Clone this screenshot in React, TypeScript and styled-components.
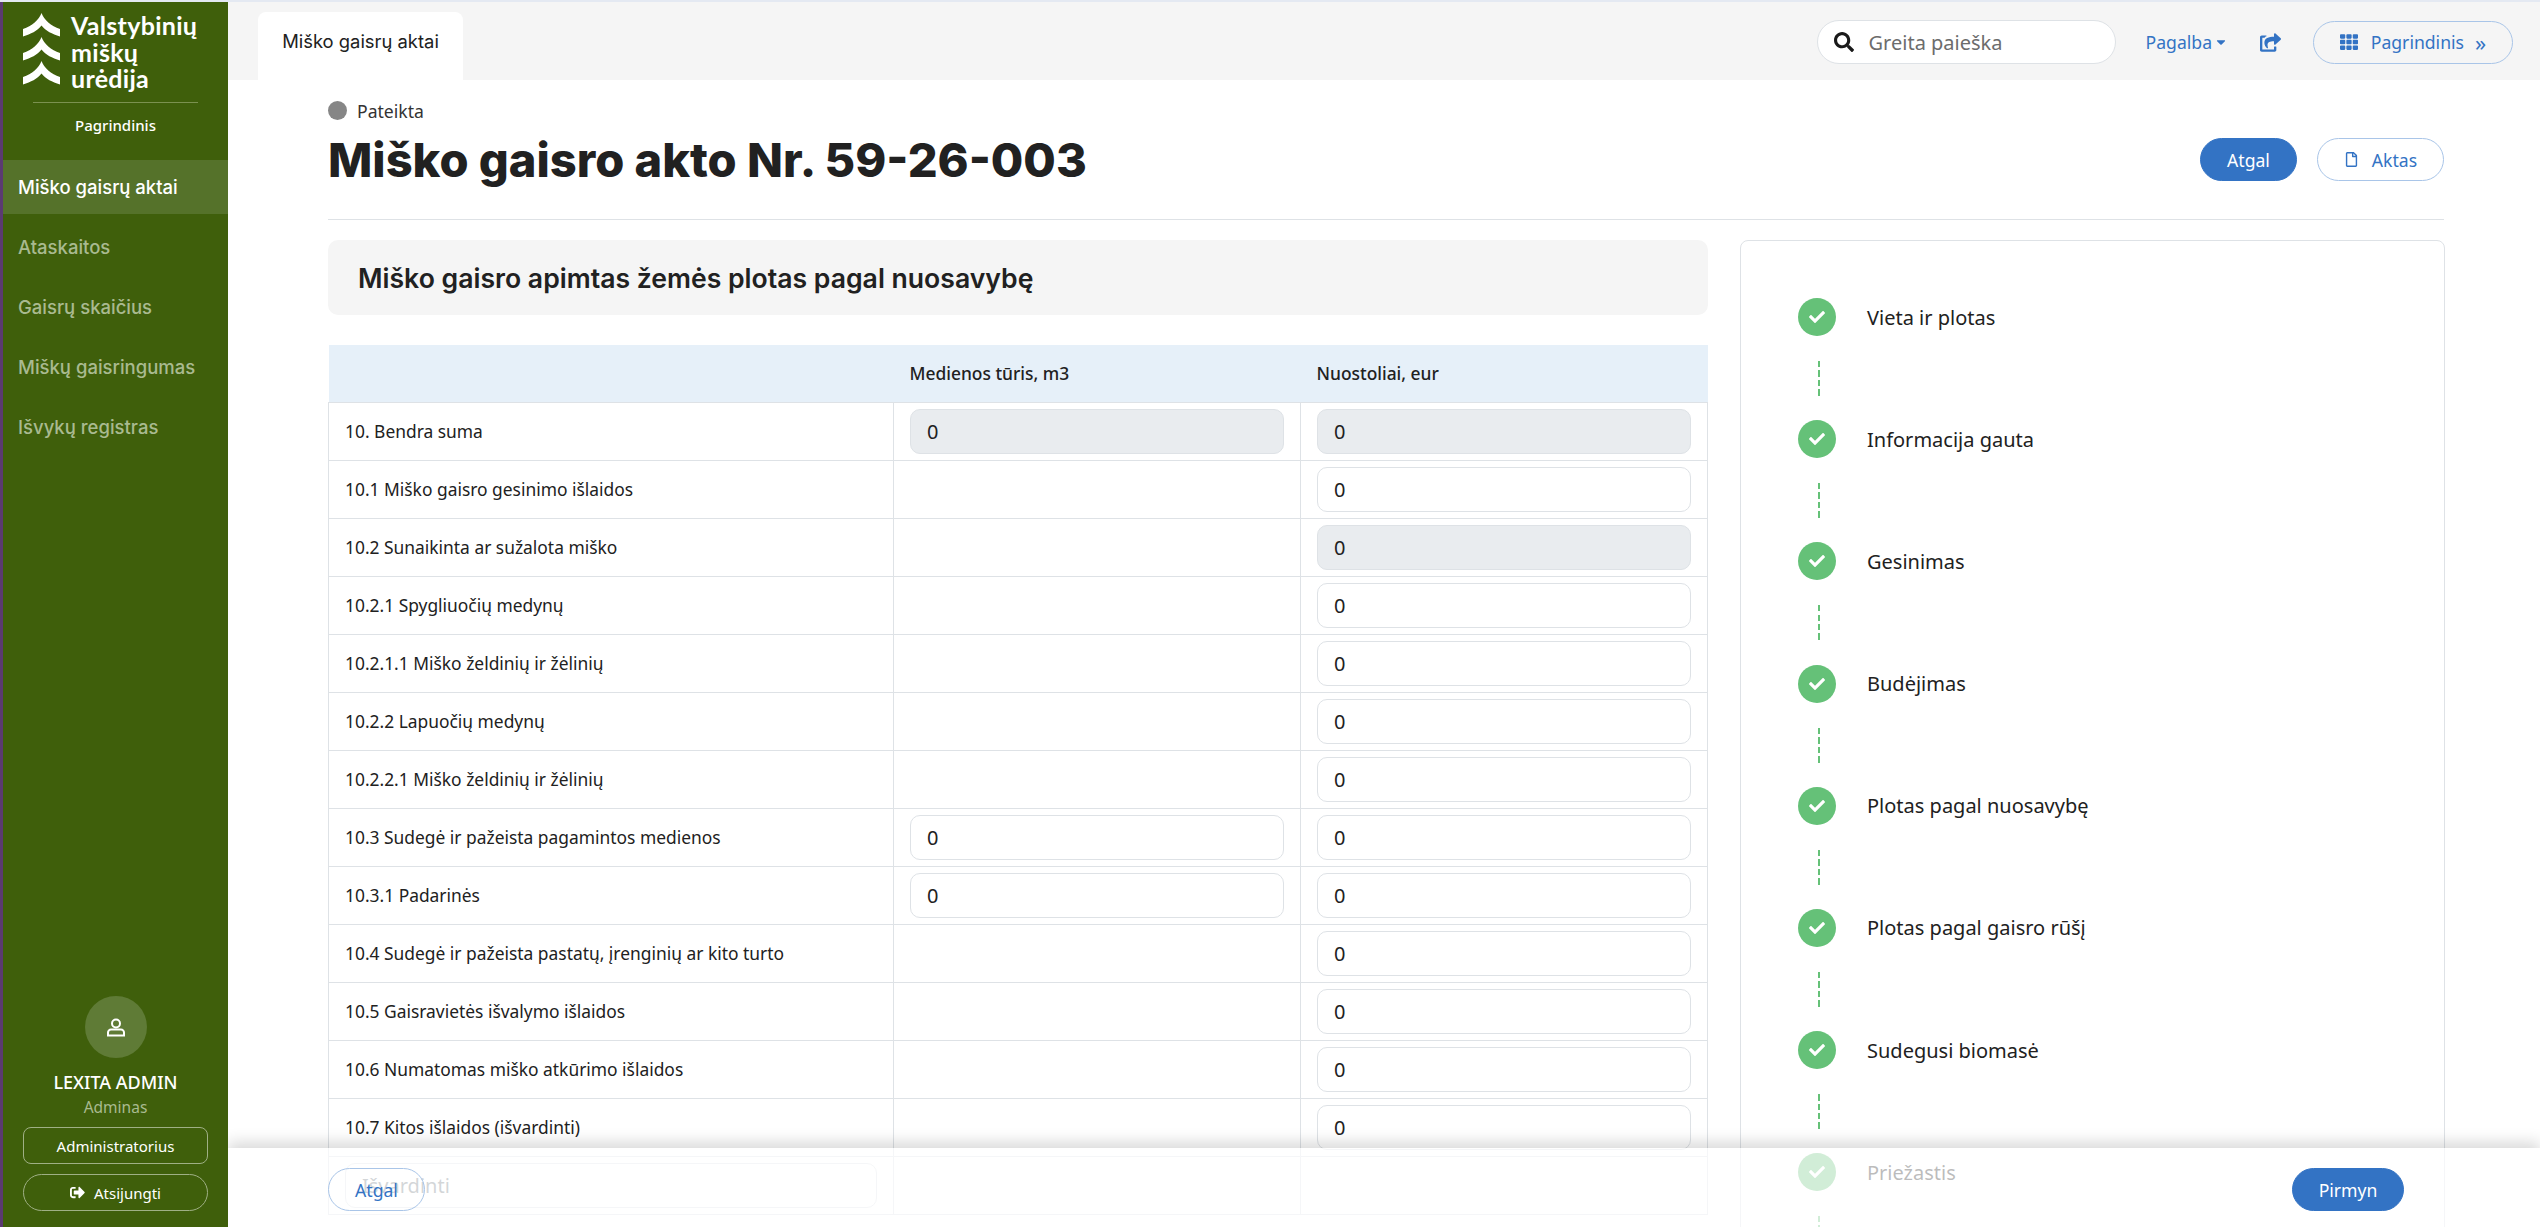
import React from 'react';
import styled, { createGlobalStyle } from 'styled-components';
import {
  FaCaretDown,
  FaCheck,
  FaRegFile,
  FaSearch,
  FaShareSquare,
  FaSignOutAlt,
  FaTh,
} from 'react-icons/fa';

const BLUE = '#3373c4';
const BORDER = '#dee2e6';
const HEADING_FONT = '"Inter", "Noto Sans", sans-serif';

const GlobalStyle = createGlobalStyle`
  html, body {
    margin: 0;
    padding: 0;
    height: 100%;
    overflow: hidden;
    background: #fff;
  }
  body {
    font-family: "Noto Sans", sans-serif;
    color: #212121;
  }
  * {
    box-sizing: border-box;
  }
`;

const Page = styled.div`
  display: flex;
  height: 1227px;
  overflow: hidden;
  border-top: 2px solid #e4e9f2;
`;

const Sidebar = styled.aside`
  display: flex;
  flex-direction: column;
  flex: 0 0 228px;
  width: 228px;
  background: #3f5f0b;
  border-left: 3px solid #5b3a72;
`;
const Logo = styled.div`
  display: flex;
  gap: 11px;
  height: 100px;
  margin: 0 0 0 20px;
  padding-top: 11px;
`;
const LogoMarks = styled.div`
  display: flex;
  flex-direction: column;
  flex: 0 0 37px;
`;
const LogoText = styled.div`
  margin-top: -1px;
  font-family: "Lato", sans-serif;
  font-size: 25px;
  font-weight: 700;
  line-height: 26.5px;
  letter-spacing: 0.3px;
  color: #fff;
`;
const SideRule = styled.hr`
  width: 165px;
  height: 1px;
  margin: 0 0 0 30px;
  border: 0;
  background: #7b9150;
`;
const SideTitle = styled.div`
  margin-top: 12px;
  text-align: center;
  font-size: 15px;
  font-weight: 500;
  line-height: 20px;
  color: #fff;
`;
const Nav = styled.nav`
  display: flex;
  flex-direction: column;
  gap: 6px;
  margin-top: 25px;
`;
const NavItem = styled.a<{ $active?: boolean }>`
  display: flex;
  align-items: center;
  height: 54px;
  padding-left: 15px;
  font-family: ${HEADING_FONT};
  font-size: 18.5px;
  font-weight: 500;
  color: ${(p) => (p.$active ? '#fff' : '#a9ba90')};
  background: ${(p) => (p.$active ? '#55722a' : 'transparent')};
`;
const User = styled.div`
  display: flex;
  flex-direction: column;
  align-items: center;
  margin-top: auto;
  padding-bottom: 16px;
`;
const Avatar = styled.div`
  display: flex;
  align-items: center;
  justify-content: center;
  width: 62px;
  height: 62px;
  border-radius: 50%;
  background: #5f7b36;
`;
const UserName = styled.div`
  margin-top: 13px;
  font-size: 18px;
  font-weight: 500;
  line-height: 22px;
  color: #fff;
`;
const UserRole = styled.div`
  margin-top: 4px;
  font-size: 15.5px;
  line-height: 20px;
  color: #a9ba90;
`;
const SideButton = styled.button<{ $round?: boolean }>`
  display: flex;
  align-items: center;
  justify-content: center;
  gap: 9px;
  width: 185px;
  height: 37px;
  margin-top: 10px;
  border: 1px solid #9fb085;
  border-radius: ${(p) => (p.$round ? '19px' : '8px')};
  background: transparent;
  font-family: inherit;
  font-size: 15px;
  font-weight: 400;
  color: #fff;
`;

const Main = styled.main`
  position: relative;
  flex: 1;
  min-width: 0;
  overflow: hidden;
`;
const TopBar = styled.header`
  display: flex;
  align-items: flex-end;
  justify-content: space-between;
  height: 78px;
  padding: 0 27px 0 30px;
  background: #f5f5f5;
`;
const Tab = styled.div`
  display: flex;
  align-items: center;
  justify-content: center;
  width: 205px;
  height: 68px;
  padding-bottom: 10px;
  border-radius: 8px 8px 0 0;
  background: #fff;
  font-family: ${HEADING_FONT};
  font-size: 18.4px;
  font-weight: 400;
  color: #212121;
`;
const TopActions = styled.div`
  display: flex;
  align-items: center;
  align-self: flex-start;
  height: 44px;
  margin-top: 18px;
`;
const Search = styled.div`
  display: flex;
  align-items: center;
  gap: 15px;
  width: 299px;
  height: 44px;
  padding-left: 16px;
  border: 1px solid ${BORDER};
  border-radius: 22px;
  background: #fff;
  font-size: 20px;
  color: #6c6c6c;
`;
const HelpLink = styled.a`
  display: flex;
  align-items: center;
  gap: 2px;
  margin-left: 30px;
  font-size: 17.6px;
  color: ${BLUE};
`;
const ShareLink = styled.a`
  display: flex;
  margin-left: 32px;
  color: ${BLUE};
`;
const PillButton = styled.button<{ $solid?: boolean; $width: number }>`
  display: flex;
  align-items: center;
  justify-content: center;
  gap: 13px;
  flex: 0 0 ${(p) => p.$width}px;
  width: ${(p) => p.$width}px;
  height: 43px;
  border: 1px solid ${(p) => (p.$solid ? BLUE : '#a9c5e8')};
  border-radius: 22px;
  background: ${(p) => (p.$solid ? BLUE : 'transparent')};
  font-family: inherit;
  font-size: 17.6px;
  color: ${(p) => (p.$solid ? '#fff' : BLUE)};
`;
const MenuButton = styled(PillButton)`
  margin-left: 32px;
`;
const Chevrons = styled.span`
  margin-left: -2px;
  font-size: 22px;
  line-height: 20px;
`;

const Content = styled.div`
  padding: 21px 96px 0 100px;
`;
const PageHead = styled.div`
  display: flex;
  justify-content: space-between;
  height: 119px;
  border-bottom: 1px solid ${BORDER};
`;
const Status = styled.div`
  display: flex;
  align-items: center;
  gap: 10px;
  height: 19px;
  font-size: 17.6px;
  color: #333;
`;
const StatusDot = styled.span`
  width: 19px;
  height: 19px;
  border-radius: 50%;
  background: #868686;
`;
const Title = styled.h1`
  margin: 10px 0 0;
  font-family: ${HEADING_FONT};
  font-size: 47px;
  font-weight: 800;
  line-height: 60px;
  color: #212121;
`;
const HeadActions = styled.div`
  display: flex;
  gap: 20px;
  padding-top: 37px;
`;
const Columns = styled.div`
  display: flex;
  gap: 32px;
  padding-top: 20px;
`;
const FormColumn = styled.section`
  flex: 0 0 1379px;
`;
const SectionHead = styled.h2`
  display: flex;
  align-items: center;
  height: 75px;
  margin: 0 0 30px;
  padding-left: 30px;
  border-radius: 10px;
  background: #f5f5f5;
  font-family: ${HEADING_FONT};
  font-size: 26.6px;
  font-weight: 600;
  color: #212121;
`;
const Table = styled.table`
  width: 1379px;
  border-collapse: collapse;
  table-layout: fixed;
  font-size: 17.4px;
`;
const Th = styled.th`
  height: 57px;
  padding: 0 16px;
  background: #e6f0f9;
  border-bottom: 1px solid ${BORDER};
  text-align: left;
  font-weight: 500;
  color: #212121;
`;
const Td = styled.td`
  height: 58px;
  padding: 0 16px;
  border: 1px solid ${BORDER};
  color: #212121;
`;
const Field = styled.div<{ $disabled?: boolean; $placeholder?: boolean }>`
  display: flex;
  align-items: center;
  height: 45px;
  padding-left: 16px;
  border: 1px solid ${BORDER};
  border-radius: 10px;
  background: ${(p) => (p.$disabled ? '#e9ecef' : '#fff')};
  font-size: 20px;
  color: ${(p) => (p.$placeholder ? '#6c757d' : '#212121')};
`;

const StepsCard = styled.aside`
  flex: 0 0 705px;
  padding: 57px 0 0 57px;
  border: 1px solid ${BORDER};
  border-radius: 8px;
`;
const Step = styled.div`
  display: flex;
  align-items: center;
  gap: 31px;
  height: 38px;
  font-size: 20px;
  color: #212121;
`;
const StepMark = styled.span`
  display: flex;
  align-items: center;
  justify-content: center;
  width: 38px;
  height: 38px;
  border-radius: 50%;
  background: #65c178;
  color: #fff;
`;
const Connector = styled.div`
  width: 2px;
  height: 35px;
  margin: 25px 0 24.2px 20px;
  background: repeating-linear-gradient(to bottom, #65c178 0 6.5px, transparent 6.5px 9.5px);
`;

const Footer = styled.div`
  position: absolute;
  left: 0;
  right: 0;
  bottom: 0;
  display: flex;
  justify-content: space-between;
  height: 79px;
  padding: 20px 136px 0 100px;
  background: rgba(255, 255, 255, 0.7);
  box-shadow: 0 -6px 14px rgba(0, 0, 0, 0.15);
`;

const LogoMark = () => (
  <svg width="37" height="24" viewBox="0 0 37 24">
    <path
      fill="#fff"
      d="M18.5 0C21 7 28 13 37 16V23.5C29 21 23 18 18.5 12.5C14 18 8 21 0 23.5V16C9 13 16 7 18.5 0Z"
    />
  </svg>
);

const UserIcon = () => (
  <svg width="18" height="19" viewBox="0 0 18 19" fill="none" stroke="#fff" strokeWidth="2">
    <circle cx="9" cy="5.5" r="4" />
    <path d="M4 11.5H14C15.6 11.5 17 12.9 17 14.5V17.5H1V14.5C1 12.9 2.4 11.5 4 11.5Z" />
  </svg>
);

const NAV_ITEMS = [
  'Miško gaisrų aktai',
  'Ataskaitos',
  'Gaisrų skaičius',
  'Miškų gaisringumas',
  'Išvykų registras',
];

type Cell = 'none' | 'edit' | 'locked';

const ROWS: { label: string; volume: Cell; loss: Cell }[] = [
  { label: '10. Bendra suma', volume: 'locked', loss: 'locked' },
  { label: '10.1 Miško gaisro gesinimo išlaidos', volume: 'none', loss: 'edit' },
  { label: '10.2 Sunaikinta ar sužalota miško', volume: 'none', loss: 'locked' },
  { label: '10.2.1 Spygliuočių medynų', volume: 'none', loss: 'edit' },
  { label: '10.2.1.1 Miško želdinių ir žėlinių', volume: 'none', loss: 'edit' },
  { label: '10.2.2 Lapuočių medynų', volume: 'none', loss: 'edit' },
  { label: '10.2.2.1 Miško želdinių ir žėlinių', volume: 'none', loss: 'edit' },
  { label: '10.3 Sudegė ir pažeista pagamintos medienos', volume: 'edit', loss: 'edit' },
  { label: '10.3.1 Padarinės', volume: 'edit', loss: 'edit' },
  { label: '10.4 Sudegė ir pažeista pastatų, įrenginių ar kito turto', volume: 'none', loss: 'edit' },
  { label: '10.5 Gaisravietės išvalymo išlaidos', volume: 'none', loss: 'edit' },
  { label: '10.6 Numatomas miško atkūrimo išlaidos', volume: 'none', loss: 'edit' },
  { label: '10.7 Kitos išlaidos (išvardinti)', volume: 'none', loss: 'edit' },
];

const STEPS = [
  'Vieta ir plotas',
  'Informacija gauta',
  'Gesinimas',
  'Budėjimas',
  'Plotas pagal nuosavybę',
  'Plotas pagal gaisro rūšį',
  'Sudegusi biomasė',
  'Priežastis',
];

const renderCell = (cell: Cell) =>
  cell === 'none' ? null : <Field $disabled={cell === 'locked'}>0</Field>;

const App = () => {
  return (
    <Page>
      <GlobalStyle />
      <Sidebar>
        <Logo>
          <LogoMarks>
            <LogoMark />
            <LogoMark />
            <LogoMark />
          </LogoMarks>
          <LogoText>
            Valstybinių
            <br />
            miškų
            <br />
            urėdija
          </LogoText>
        </Logo>
        <SideRule />
        <SideTitle>Pagrindinis</SideTitle>
        <Nav>
          {NAV_ITEMS.map((item, index) => (
            <NavItem key={item} $active={index === 0}>
              {item}
            </NavItem>
          ))}
        </Nav>
        <User>
          <Avatar>
            <UserIcon />
          </Avatar>
          <UserName>LEXITA ADMIN</UserName>
          <UserRole>Adminas</UserRole>
          <SideButton>Administratorius</SideButton>
          <SideButton $round>
            <FaSignOutAlt size={15} />
            Atsijungti
          </SideButton>
        </User>
      </Sidebar>

      <Main>
        <TopBar>
          <Tab>Miško gaisrų aktai</Tab>
          <TopActions>
            <Search>
              <FaSearch size={20} color="#1a1a1a" />
              Greita paieška
            </Search>
            <HelpLink>
              Pagalba
              <FaCaretDown size={14} />
            </HelpLink>
            <ShareLink>
              <FaShareSquare size={21} />
            </ShareLink>
            <MenuButton $width={200}>
              <FaTh size={18} />
              Pagrindinis
              <Chevrons>»</Chevrons>
            </MenuButton>
          </TopActions>
        </TopBar>

        <Content>
          <PageHead>
            <div>
              <Status>
                <StatusDot />
                Pateikta
              </Status>
              <Title>Miško gaisro akto Nr. 59-26-003</Title>
            </div>
            <HeadActions>
              <PillButton $solid $width={97}>
                Atgal
              </PillButton>
              <PillButton $width={127}>
                <FaRegFile size={15} />
                Aktas
              </PillButton>
            </HeadActions>
          </PageHead>

          <Columns>
            <FormColumn>
              <SectionHead>Miško gaisro apimtas žemės plotas pagal nuosavybę</SectionHead>
              <Table>
                <colgroup>
                  <col width="565" />
                  <col width="407" />
                  <col width="407" />
                </colgroup>
                <thead>
                  <tr>
                    <Th />
                    <Th>Medienos tūris, m3</Th>
                    <Th>Nuostoliai, eur</Th>
                  </tr>
                </thead>
                <tbody>
                  {ROWS.map((row) => (
                    <tr key={row.label}>
                      <Td>{row.label}</Td>
                      <Td>{renderCell(row.volume)}</Td>
                      <Td>{renderCell(row.loss)}</Td>
                    </tr>
                  ))}
                  <tr>
                    <Td>
                      <Field $placeholder>Išvardinti</Field>
                    </Td>
                    <Td />
                    <Td />
                  </tr>
                </tbody>
              </Table>
            </FormColumn>

            <StepsCard>
              {STEPS.map((step) => (
                <div key={step}>
                  <Step>
                    <StepMark>
                      <FaCheck size={16} />
                    </StepMark>
                    {step}
                  </Step>
                  <Connector />
                </div>
              ))}
            </StepsCard>
          </Columns>
        </Content>

        <Footer>
          <PillButton $width={97}>Atgal</PillButton>
          <PillButton $solid $width={112}>
            Pirmyn
          </PillButton>
        </Footer>
      </Main>
    </Page>
  );
};

export default App;
